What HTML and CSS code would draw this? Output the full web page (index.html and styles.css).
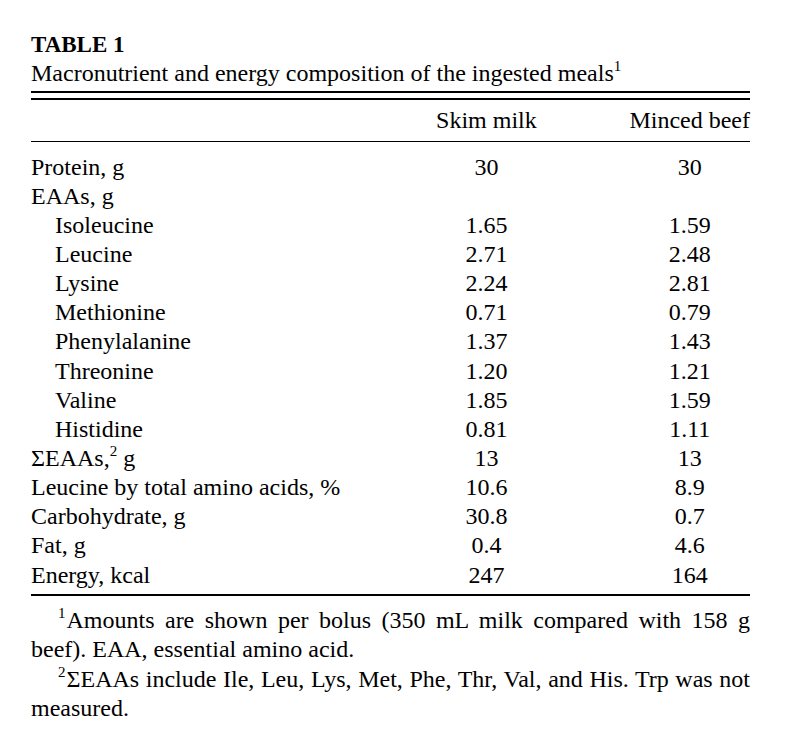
FILE: index.html
```html
<!DOCTYPE html>
<html>
<head>
<meta charset="utf-8">
<link rel="stylesheet" href="styles.css">
</head>
<body>
<div class="page">
  <div class="label">TABLE 1</div>
  <div class="caption">Macronutrient and energy composition of the ingested meals<sup>1</sup></div>
  <div class="rule-double"></div>
  <table class="data">
    <thead>
      <tr><th class="name"></th><th class="c1">Skim milk</th><th class="c2">Minced beef</th></tr>
    </thead>
    <tbody>
      <tr class="first"><td class="name">Protein, g</td><td class="c1">30</td><td class="c2">30</td></tr>
      <tr><td class="name">EAAs, g</td><td class="c1"></td><td class="c2"></td></tr>
      <tr><td class="name sub">Isoleucine</td><td class="c1">1.65</td><td class="c2">1.59</td></tr>
      <tr><td class="name sub">Leucine</td><td class="c1">2.71</td><td class="c2">2.48</td></tr>
      <tr><td class="name sub">Lysine</td><td class="c1">2.24</td><td class="c2">2.81</td></tr>
      <tr><td class="name sub">Methionine</td><td class="c1">0.71</td><td class="c2">0.79</td></tr>
      <tr><td class="name sub">Phenylalanine</td><td class="c1">1.37</td><td class="c2">1.43</td></tr>
      <tr><td class="name sub">Threonine</td><td class="c1">1.20</td><td class="c2">1.21</td></tr>
      <tr><td class="name sub">Valine</td><td class="c1">1.85</td><td class="c2">1.59</td></tr>
      <tr><td class="name sub">Histidine</td><td class="c1">0.81</td><td class="c2">1.11</td></tr>
      <tr><td class="name">ΣEAAs,<sup>2</sup> g</td><td class="c1">13</td><td class="c2">13</td></tr>
      <tr><td class="name">Leucine by total amino acids, %</td><td class="c1">10.6</td><td class="c2">8.9</td></tr>
      <tr><td class="name">Carbohydrate, g</td><td class="c1">30.8</td><td class="c2">0.7</td></tr>
      <tr><td class="name">Fat, g</td><td class="c1">0.4</td><td class="c2">4.6</td></tr>
      <tr class="last"><td class="name">Energy, kcal</td><td class="c1">247</td><td class="c2">164</td></tr>
    </tbody>
  </table>
  <div class="notes">
    <p><sup>1</sup>Amounts are shown per bolus (350 mL milk compared with 158 g beef). EAA, essential amino acid.</p>
    <p><sup>2</sup>ΣEAAs include Ile, Leu, Lys, Met, Phe, Thr, Val, and His. Trp was not measured.</p>
  </div>
</div>
</body>
</html>
```
FILE: styles.css
```css
html, body {
  margin: 0;
  padding: 0;
  background: #fff;
}
body {
  font-family: "Liberation Serif", "Times New Roman", serif;
  color: #000;
  font-size: 24px;
}
.page {
  width: 719px;
  padding: 31px 0 0 31px;
}
.label {
  font-weight: bold;
  font-size: 23px;
  line-height: 27px;
}
.caption {
  line-height: 30px;
}
sup {
  font-size: 15px;
  line-height: 0;
  vertical-align: 10px;
}
.rule-double {
  margin-top: 3px;
  height: 5px;
  border-top: 2px solid #000;
  border-bottom: 2px solid #000;
}
.data {
  width: 100%;
  border-collapse: collapse;
}
.data th {
  font-weight: normal;
  height: 41px;
  padding: 0;
  border-bottom: 1px solid #000;
  white-space: nowrap;
}
.data td {
  padding: 0;
  height: 29.15px;
  line-height: 26px;
}
.data tr.first td {
  padding-top: 10px;
}
.data tr.last td {
  padding-bottom: 5px;
  border-bottom: 2px solid #000;
}
.name {
  text-align: left;
  white-space: nowrap;
}
.data td.sub {
  padding-left: 24px;
}
.c1 {
  width: 120px;
  text-align: center;
}
.c2 {
  width: 120px;
  text-align: center;
}
.data th.c2, .data td.c2 {
  padding-left: 83px;
}
.notes {
  padding-top: 10px;
}
.notes p {
  margin: 0;
  text-indent: 27px;
  text-align: justify;
  line-height: 29.3px;
}
.notes sup {
  display: inline-block;
  line-height: 15px;
  text-indent: 0;
  margin-right: 1px;
}
```
